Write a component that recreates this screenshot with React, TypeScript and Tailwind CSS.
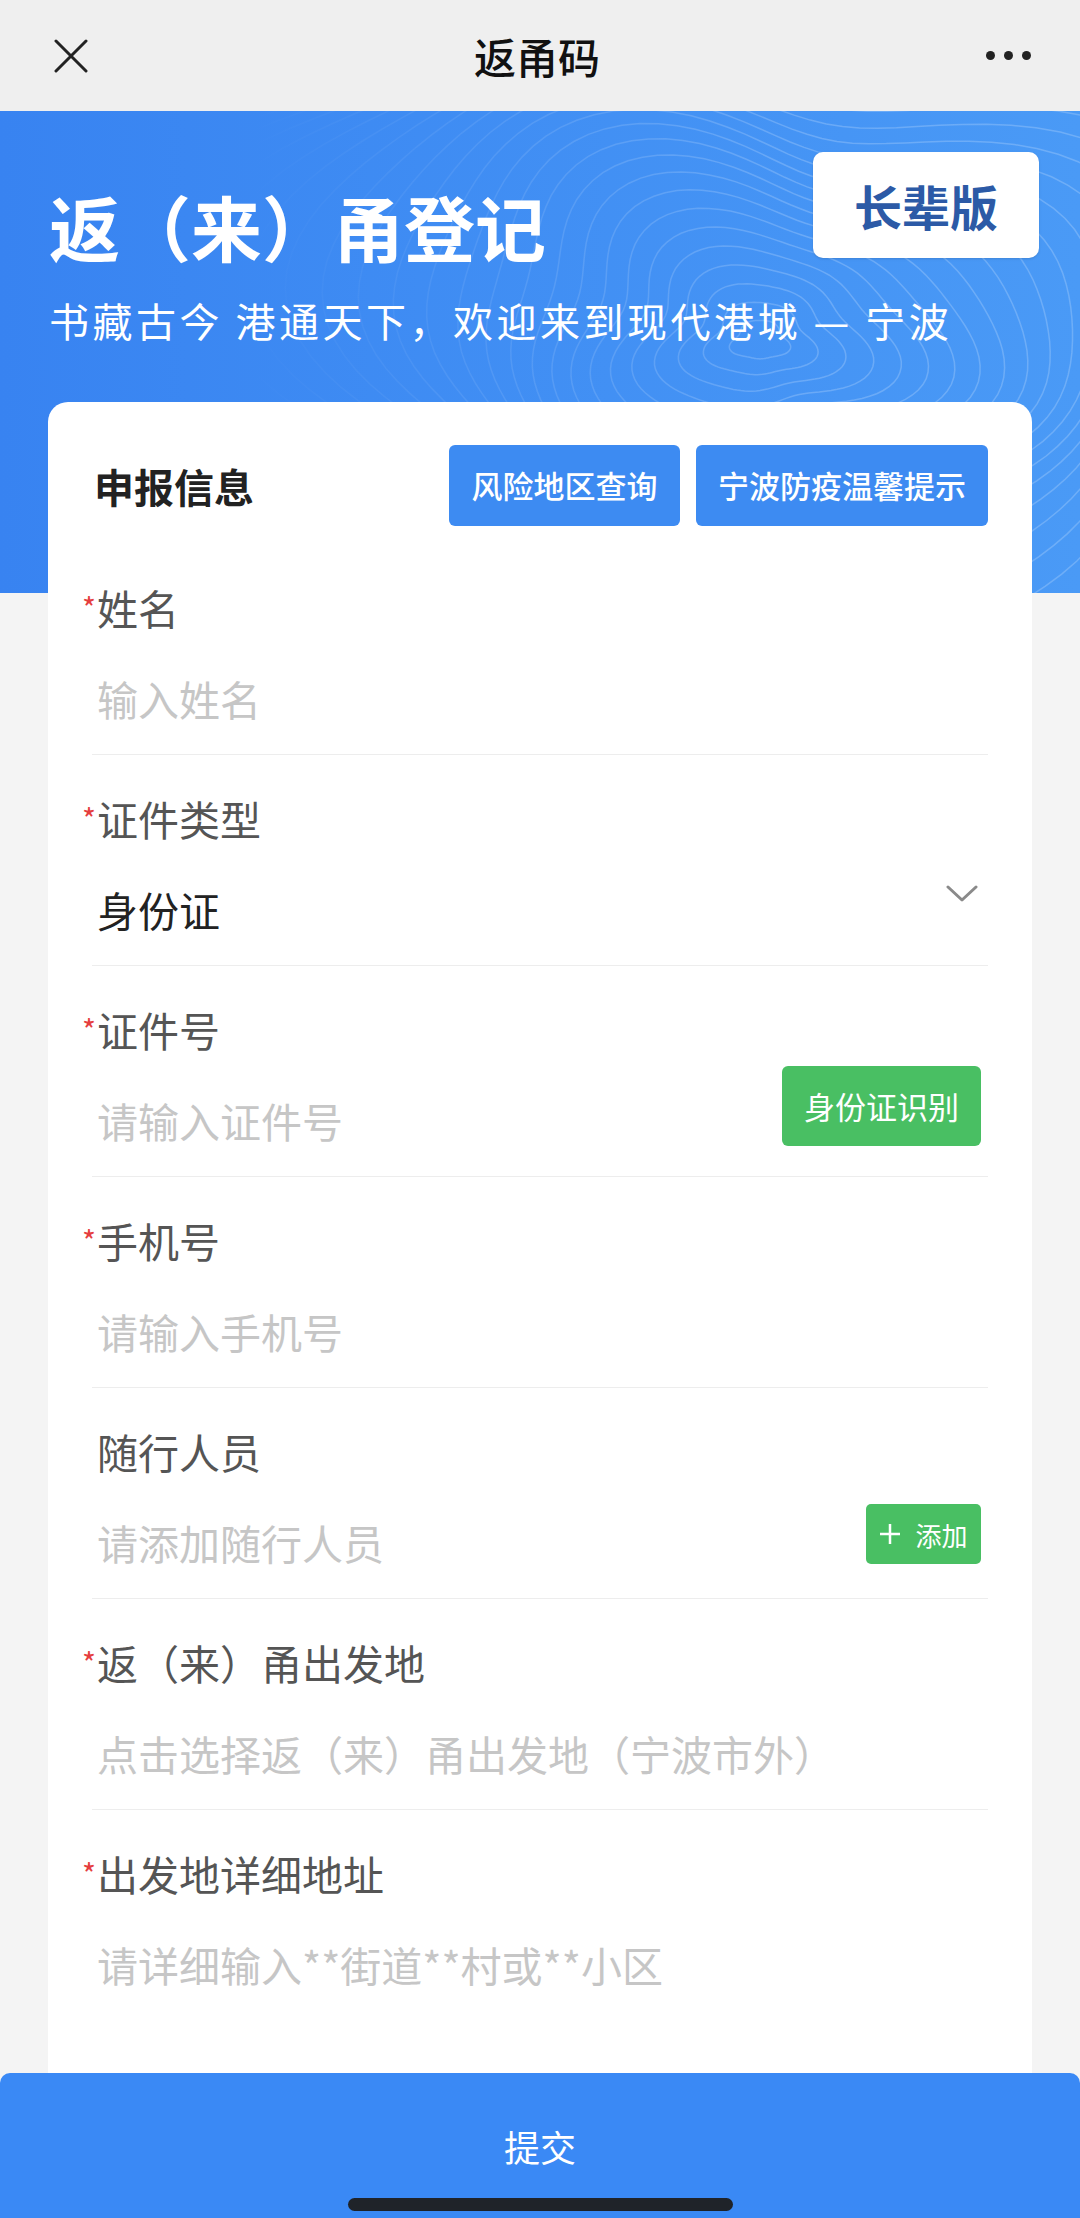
import React from 'react';

type Field = {
  label: string;
  required?: boolean;
  value?: string;
  placeholder?: string;
  extra?: 'select' | 'scan' | 'add';
  last?: boolean;
};

const fields: Field[] = [
  { label: '姓名', required: true, placeholder: '输入姓名' },
  { label: '证件类型', required: true, value: '身份证', extra: 'select' },
  { label: '证件号', required: true, placeholder: '请输入证件号', extra: 'scan' },
  { label: '手机号', required: true, placeholder: '请输入手机号' },
  { label: '随行人员', placeholder: '请添加随行人员', extra: 'add' },
  { label: '返（来）甬出发地', required: true, placeholder: '点击选择返（来）甬出发地（宁波市外）' },
  { label: '出发地详细地址', required: true, placeholder: '请详细输入**街道**村或**小区', last: true },
];

// topographic lines behind the header
function contourPaths() {
  const paths: string[] = [];
  const cx = 760;
  const cy = 230;
  for (let i = 0; i < 30; i++) {
    const r = 24 + i * 21;
    let d = '';
    for (let s = 0; s <= 120; s++) {
      const t = (s / 120) * Math.PI * 2;
      const k = 1 + 0.13 * Math.sin(3 * t + i * 0.18) + 0.06 * Math.sin(5 * t - i * 0.1);
      const x = cx + Math.cos(t) * r * k * 1.15;
      const y = cy + Math.sin(t) * r * k * 0.8;
      d += (s === 0 ? 'M' : 'L') + x.toFixed(1) + ' ' + y.toFixed(1) + ' ';
    }
    paths.push(d + 'Z');
  }
  return paths;
}

const contours = contourPaths();

function FieldRow({ f }: { f: Field }) {
  return (
    <div className={`pt-[43px] pb-[16px] ${f.last ? '' : 'border-b border-[#ededed]'}`}>
      <div className="h-[40px] pl-[5px] text-[41px] leading-[40px] text-[#555555] whitespace-nowrap">
        {f.required && (
          <span className="inline-block -ml-[15px] w-[15px] align-top text-[30px] leading-[40px] text-[#e53e3e]">*</span>
        )}
        {f.label}
      </div>
      <div className="mt-[31px] flex h-[80px] items-center justify-between pl-[5px]">
        {f.value ? (
          <span className="text-[41px] leading-[40px] text-[#222222]">{f.value}</span>
        ) : (
          <span className="text-[41px] leading-[40px] text-[#c6c6c6] whitespace-nowrap">{f.placeholder}</span>
        )}
        {f.extra === 'select' && (
          <svg className="mr-[10px] mb-[30px]" width="32" height="18" viewBox="0 0 32 18" fill="none">
            <path d="M2 2 L16 15 L30 2" stroke="#8a8a8a" strokeWidth="3" strokeLinecap="round" strokeLinejoin="round" />
          </svg>
        )}
        {f.extra === 'scan' && (
          <button type="button" className="mr-[7px] mb-[28px] flex h-[80px] w-[199px] items-center justify-center rounded-[6px] bg-[#49bf63] text-[31px] text-white">
            身份证识别
          </button>
        )}
        {f.extra === 'add' && (
          <button type="button" className="mr-[7px] mb-[16px] flex h-[60px] w-[115px] items-center justify-center gap-[14px] rounded-[5px] bg-[#49bf63] text-[26px] text-white">
            <svg width="22" height="22" viewBox="0 0 22 22" fill="none">
              <path d="M11 1 V21 M1 11 H21" stroke="white" strokeWidth="2.5" />
            </svg>
            添加
          </button>
        )}
      </div>
    </div>
  );
}

export default function App() {
  return (
    <div className="relative h-[2218px] w-[1080px] overflow-hidden bg-[#f4f4f4] font-['Noto_Sans_CJK_SC','Noto_Sans',sans-serif]">
      {/* top bar */}
      <div className="flex h-[111px] items-center justify-between bg-[#efefef] pl-[54px] pr-[49px]">
        <svg width="34" height="34" viewBox="0 0 34 34" fill="none">
          <path d="M2 2 L32 32 M32 2 L2 32" stroke="#222222" strokeWidth="3" strokeLinecap="round" />
        </svg>
        <div className="text-[42px] font-medium text-[#111111]">返甬码</div>
        <div className="flex w-[45px] items-center justify-between">
          <span className="h-[9px] w-[9px] rounded-full bg-[#222222]" />
          <span className="h-[9px] w-[9px] rounded-full bg-[#222222]" />
          <span className="h-[9px] w-[9px] rounded-full bg-[#222222]" />
        </div>
      </div>

      {/* blue header */}
      <div className="relative h-[482px] overflow-hidden bg-linear-to-r from-[#3883f1] to-[#4a9af6] pl-[49px] pr-[41px] pt-[41px]">
        <svg className="absolute inset-0" width="1080" height="482" viewBox="0 0 1080 482" fill="none">
          <defs>
            <linearGradient id="fade" x1="250" y1="0" x2="800" y2="0" gradientUnits="userSpaceOnUse">
              <stop offset="0" stopColor="#ffffff" stopOpacity="0" />
              <stop offset="1" stopColor="#ffffff" stopOpacity="0.2" />
            </linearGradient>
          </defs>
          {contours.map((d, i) => (
            <path key={i} d={d} stroke="url(#fade)" strokeWidth="1.5" />
          ))}
        </svg>
        <div className="relative flex items-start justify-between">
          <div className="mt-[38px] text-[71px] font-bold leading-[70px] text-white">返（来）甬登记</div>
          <button type="button" className="flex h-[106px] w-[226px] items-center justify-center rounded-[10px] bg-white text-[48px] font-bold text-[#2c5aa6] shadow-sm">
            长辈版
          </button>
        </div>
        <div className="relative mt-[40px] whitespace-nowrap text-[40px] leading-[40px] tracking-[3.5px] text-white">
          书藏古今 港通天下，欢迎来到现代港城 — 宁波
        </div>
      </div>

      {/* form card */}
      <div className="relative mx-[48px] -mt-[191px] rounded-t-[20px] bg-white px-[44px] pb-[300px] pt-[43px]">
        <div className="flex h-[81px] items-center justify-between">
          <div className="pl-[2px] text-[40px] font-bold text-[#222222]">申报信息</div>
          <div className="flex gap-[16px]">
            <button type="button" className="h-[81px] w-[231px] rounded-[6px] bg-[#3d8bf2] text-[31px] font-medium text-white">
              风险地区查询
            </button>
            <button type="button" className="h-[81px] w-[292px] rounded-[6px] bg-[#3d8bf2] text-[31px] font-medium text-white">
              宁波防疫温馨提示
            </button>
          </div>
        </div>
        <div className="mt-[18px]">
          {fields.map((f) => (
            <FieldRow key={f.label} f={f} />
          ))}
        </div>
      </div>

      {/* submit bar */}
      <div className="absolute bottom-0 left-0 right-0 flex h-[145px] flex-col items-center rounded-t-[10px] bg-[#3a89f5]">
        <div className="mt-[52px] text-[36px] leading-[42px] text-white">提交</div>
        <div className="mt-[31px] h-[13px] w-[385px] rounded-full bg-[#1f2329]" />
      </div>
    </div>
  );
}
